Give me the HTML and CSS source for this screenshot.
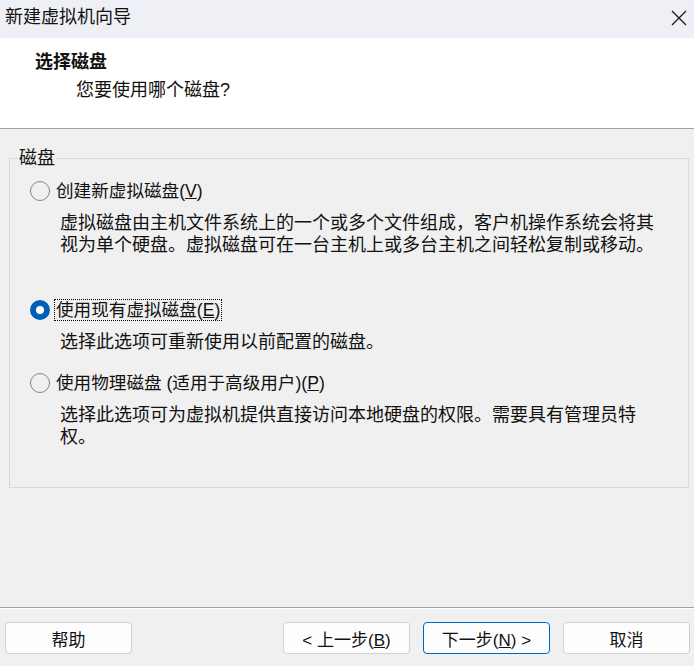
FILE: index.html
```html
<!DOCTYPE html>
<html lang="zh-CN">

<head>
    <meta charset="UTF-8">
    <title>新建虚拟机向导</title>
    <link rel="stylesheet" href="styles.css">
</head>

<body>
    <div class="window">
        <div class="titlebar">
            <span class="title">新建虚拟机向导</span>
            <svg class="close" width="16" height="16" viewBox="0 0 16 16">
                <path d="M1 1 L15 15 M15 1 L1 15" stroke="#1a1a1a" stroke-width="1.3" fill="none" />
            </svg>
        </div>

        <div class="header">
            <h1>选择磁盘</h1>
            <p>您要使用哪个磁盘?</p>
        </div>

        <div class="content">
            <fieldset class="group">
                <legend>磁盘</legend>

                <div class="option first">
                    <span class="radio"></span>
                    <span class="label">创建新虚拟磁盘(<u>V</u>)</span>
                </div>
                <p class="desc">虚拟磁盘由主机文件系统上的一个或多个文件组成，客户机操作系统会将其视为单个硬盘。虚拟磁盘可在一台主机上或多台主机之间轻松复制或移动。</p>

                <div class="option second">
                    <span class="radio checked"></span>
                    <span class="label focused">使用现有虚拟磁盘(<u>E</u>)</span>
                </div>
                <p class="desc">选择此选项可重新使用以前配置的磁盘。</p>

                <div class="option third">
                    <span class="radio"></span>
                    <span class="label">使用物理磁盘 (适用于高级用户)(<u>P</u>)</span>
                </div>
                <p class="desc">选择此选项可为虚拟机提供直接访问本地硬盘的权限。需要具有管理员特权。</p>
            </fieldset>
        </div>

        <div class="footer">
            <button class="btn">帮助</button>
            <div class="spacer"></div>
            <button class="btn">&lt; 上一步(<u>B</u>)</button>
            <button class="btn default">下一步(<u>N</u>) &gt;</button>
            <button class="btn">取消</button>
        </div>
    </div>
</body>

</html>
```

FILE: styles.css
```css
body {
    margin: 0;
    padding: 0;
    background-color: #f0f0f0;
    font-family: "Liberation Sans", "Noto Sans CJK SC", sans-serif;
    color: #111;
}

.window {
    width: 694px;
    height: 666px;
    display: flex;
    flex-direction: column;
    overflow: hidden;
}

.titlebar {
    height: 38px;
    flex-shrink: 0;
    background-color: #eff0f5;
    display: flex;
    align-items: center;
    justify-content: space-between;
    padding: 0 7px 0 5px;
    box-sizing: border-box;
}

.title {
    font-size: 18px;
    line-height: 24px;
    margin-top: -4px;
}

.close {
    margin-top: -3px;
}

.header {
    height: 91px;
    flex-shrink: 0;
    background-color: #fff;
    border-bottom: 1px solid #a0a0a0;
    padding: 12px 0 0 35px;
    box-sizing: border-box;
}

.header h1 {
    margin: 0;
    font-size: 18px;
    font-weight: bold;
    line-height: 24px;
}

.header p {
    margin: 4px 0 0 41px;
    font-size: 18px;
    line-height: 24px;
}

.content {
    flex: 1;
    padding: 17px 5px 0 9px;
}

.group {
    margin: 0;
    padding: 9px 0 39px 20px;
    border: 1px solid #dadada;
    min-width: 0;
}

.group legend {
    margin-left: -12px;
    padding: 0 1px;
    font-size: 18px;
    line-height: 24px;
}

.option {
    display: flex;
    align-items: center;
    height: 24px;
    font-size: 17.6px;
}

.option.second {
    margin-top: 42px;
}

.option.third {
    margin-top: 18px;
}

.radio {
    width: 20px;
    height: 20px;
    border: 1px solid #858585;
    border-radius: 50%;
    box-sizing: border-box;
    margin-right: 6px;
    flex-shrink: 0;
}

.radio.checked {
    border: 6px solid #005fb8;
    background-color: #fff;
}

.label {
    line-height: 20px;
    border: 1px solid transparent;
    padding: 0 1px;
    margin-left: -2px;
}

.label.focused {
    border: 1px dotted #000;
}

.desc {
    margin: 9px 0 0 30px;
    width: 600px;
    font-size: 18px;
    line-height: 22px;
}

.footer {
    height: 59px;
    flex-shrink: 0;
    border-top: 1px solid #a0a0a0;
    box-shadow: inset 0 1px #fff;
    box-sizing: border-box;
    display: flex;
    align-items: flex-start;
    gap: 13px;
    padding: 14px 4px 0 5px;
}

.spacer {
    flex: 1;
}

.btn {
    width: 127px;
    height: 32px;
    background-color: #fdfdfd;
    border: 1px solid #d0d0d0;
    border-radius: 4px;
    font-family: "Liberation Sans", "Noto Sans CJK SC", sans-serif;
    font-size: 17px;
    color: #111;
    padding: 0;
}

.btn.default {
    border-color: #0067c0;
}
```
